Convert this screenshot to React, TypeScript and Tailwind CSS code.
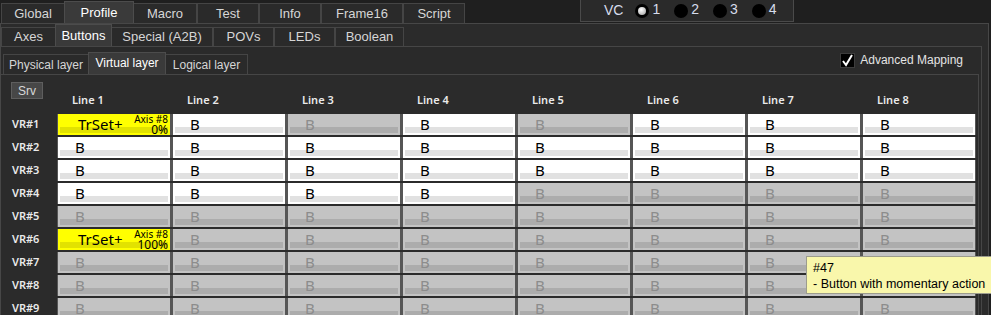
const topTabs = [
    { label: "Global", w: 64 },
    { label: "Profile", w: 70, active: true },
    { label: "Macro", w: 64 },
    { label: "Test", w: 62 },
    { label: "Info", w: 62 },
    { label: "Frame16", w: 82 },
    { label: "Script", w: 62 },
];

const subTabs = [
    { label: "Axes", w: 55 },
    { label: "Buttons", w: 57, active: true },
    { label: "Special (A2B)", w: 102 },
    { label: "POVs", w: 61 },
    { label: "LEDs", w: 61 },
    { label: "Boolean", w: 69 },
];

const layerTabs = [
    { label: "Physical layer", w: 86 },
    { label: "Virtual layer", w: 78, active: true },
    { label: "Logical layer", w: 83 },
];

// w = white, d = disabled, y = yellow (TrSet+)
const rows: { name: string; cells: string; pct?: string }[] = [
    { name: "VR#1", cells: "ywdwdwww", pct: "0%" },
    { name: "VR#2", cells: "wwwwwwww" },
    { name: "VR#3", cells: "wwwwwwww" },
    { name: "VR#4", cells: "wwwwdddd" },
    { name: "VR#5", cells: "dddddddd" },
    { name: "VR#6", cells: "yddddddd", pct: "100%" },
    { name: "VR#7", cells: "dddddddd" },
    { name: "VR#8", cells: "dddddddd" },
    { name: "VR#9", cells: "dddddddd" },
];

const Tab = ({ label, w, active, h }: { label: string; w: number; active?: boolean; h: string }) => (
    <div
        style={{ width: w }}
        className={
            active
                ? "flex items-start justify-center pt-[1px] border border-b-0 border-[#4c4c4c] bg-[#3a3a3a] text-white self-end h-[22px] -mx-[1px] z-10"
                : `flex items-center justify-center border border-b-0 border-[#454545] bg-[#2a2a2a] text-[#d6d6d6] ${h}`
        }
    >
        {label}
    </div>
);

const Cell = ({ kind, pct }: { kind: string; pct?: string }) => {
    if (kind === "y") {
        return (
            <div className="relative w-[112px] h-[21px] bg-[#ffff00] flex flex-col">
                <div className="h-[13px]" />
                <div className="mx-[2px] h-[6px] bg-[#e2e200]" />
                <span className="absolute left-[20px] top-[1px] text-[15px] leading-[18px] text-black">TrSet+</span>
                <div className="absolute right-[2px] top-0 flex flex-col items-end leading-none text-black">
                    <span className="text-[10px] leading-[10px]">Axis #8</span>
                    <span className="text-[12px] leading-[11px]">{pct}</span>
                </div>
            </div>
        );
    }
    const on = kind === "w";
    return (
        <div className={`relative w-[112px] h-[21px] flex flex-col ${on ? "bg-white" : "bg-[#c3c3c3]"}`}>
            <div className="h-[13px]" />
            <div className={`mx-[2px] h-[6px] ${on ? "bg-[#e1e1e1]" : "bg-[#acacac]"}`} />
            <span
                className={`absolute left-[17px] top-[1px] text-[15px] leading-[18px] ${on ? "text-black" : "text-[#8c8c8c]"}`}
            >
                B
            </span>
        </div>
    );
};

export default function App() {
    return (
        <div
            className="relative w-[991px] h-[315px] overflow-hidden bg-[#1f1f1f] text-[13px]"
            style={{ fontFamily: "'Liberation Sans', Arial, sans-serif" }}
        >
            {/* top tabs + VC */}
            <div className="flex h-[23px]">
                <div className="flex items-end pl-[1px]">
                    {topTabs.map((t) => (
                        <Tab key={t.label} {...t} h="h-[20px]" />
                    ))}
                </div>
                <div className="ml-[115px] w-[214px] h-[22px] border border-t-0 border-[#4a4a4a] bg-[#2a2a2a] flex items-center pl-[23px] text-[14px] text-[#d6dcec]">
                    <span className="mr-[12px]">VC</span>
                    {["1", "2", "3", "4"].map((n, i) => (
                        <div key={n} className="flex items-center mr-[14px]">
                            <div className="w-[14px] h-[14px] rounded-full bg-black flex items-center justify-center">
                                {i === 0 && (
                                    <div className="w-[8px] h-[8px] rounded-full bg-[radial-gradient(circle_at_40%_35%,#ffffff,#9a9a9a)]" />
                                )}
                            </div>
                            <span className="ml-[3px] -mt-[3px]">{n}</span>
                        </div>
                    ))}
                </div>
            </div>

            {/* main panel */}
            <div className="w-[989px] h-[300px] border border-[#474747] bg-[#2b2b2b]">
                <div className="flex items-end h-[22px]">
                    {subTabs.map((t) => (
                        <Tab key={t.label} {...t} h="h-[19px]" />
                    ))}
                </div>
                <div className="w-[981px] h-[280px] border-t border-r border-[#464646] bg-[#2a2a2a]">
                    <div className="flex items-end h-[27px] pl-[2px] text-[12px]">
                        {layerTabs.map((t) => (
                            <Tab key={t.label} {...t} h="h-[20px]" />
                        ))}
                        <div className="ml-auto mr-[18px] mb-[5px] flex items-center text-[#e4e4e4]">
                            <div className="w-[15px] h-[15px] bg-black border border-[#3c3c3c] flex items-center justify-center mr-[5px]">
                                <svg width="13" height="13" viewBox="0 0 13 13">
                                    <path d="M2 7 L5 11 L11 1" fill="none" stroke="white" strokeWidth="2" />
                                </svg>
                            </div>
                            <span>Advanced Mapping</span>
                        </div>
                    </div>
                    <div className="w-[978px] h-[260px] border-t border-r border-[#464646] bg-[#2b2b2b] pt-[7px]">
                        <div className="ml-[10px] w-[32px] h-[17px] bg-[#474747] border border-[#5e5e5e] text-[#d8d8d8] text-[12px] flex items-center justify-center">
                            Srv
                        </div>
                        <div style={{ fontFamily: "'Noto Sans', 'Open Sans', sans-serif" }}>
                            <div className="flex h-[16px] items-center pl-[57px] -mt-[7px] mb-[6px]">
                                {Array.from({ length: 8 }, (_, i) => (
                                    <div key={i} className="w-[115px] pl-[14px] text-[11px] font-semibold text-[#eaeaea]">
                                        Line {i + 1}
                                    </div>
                                ))}
                            </div>
                            <div className="flex flex-col gap-[2px]">
                                {rows.map((r) => (
                                    <div key={r.name} className="flex items-center">
                                        <div className="w-[56px] pl-[11px] text-[11px] font-semibold text-[#eaeaea]">
                                            {r.name}
                                        </div>
                                        <div className="flex gap-[3px] bg-[#565656] px-[1px] ">
                                            {r.cells.split("").map((c, i) => (
                                                <Cell key={i} kind={c} pct={r.pct} />
                                            ))}
                                        </div>
                                    </div>
                                ))}
                            </div>
                        </div>
                    </div>
                </div>
            </div>

            {/* tooltip */}
            <div
                className="absolute left-[806px] top-[256px] w-[190px] h-[38px] bg-[#f9f7ab] border border-[#9c9c8c] pl-[6px] pt-[3px] text-[12.5px] leading-[16px] text-black"
                style={{ fontFamily: "'Liberation Sans', Arial, sans-serif" }}
            >
                <div>#47</div>
                <div>- Button with momentary action</div>
            </div>
        </div>
    );
}
